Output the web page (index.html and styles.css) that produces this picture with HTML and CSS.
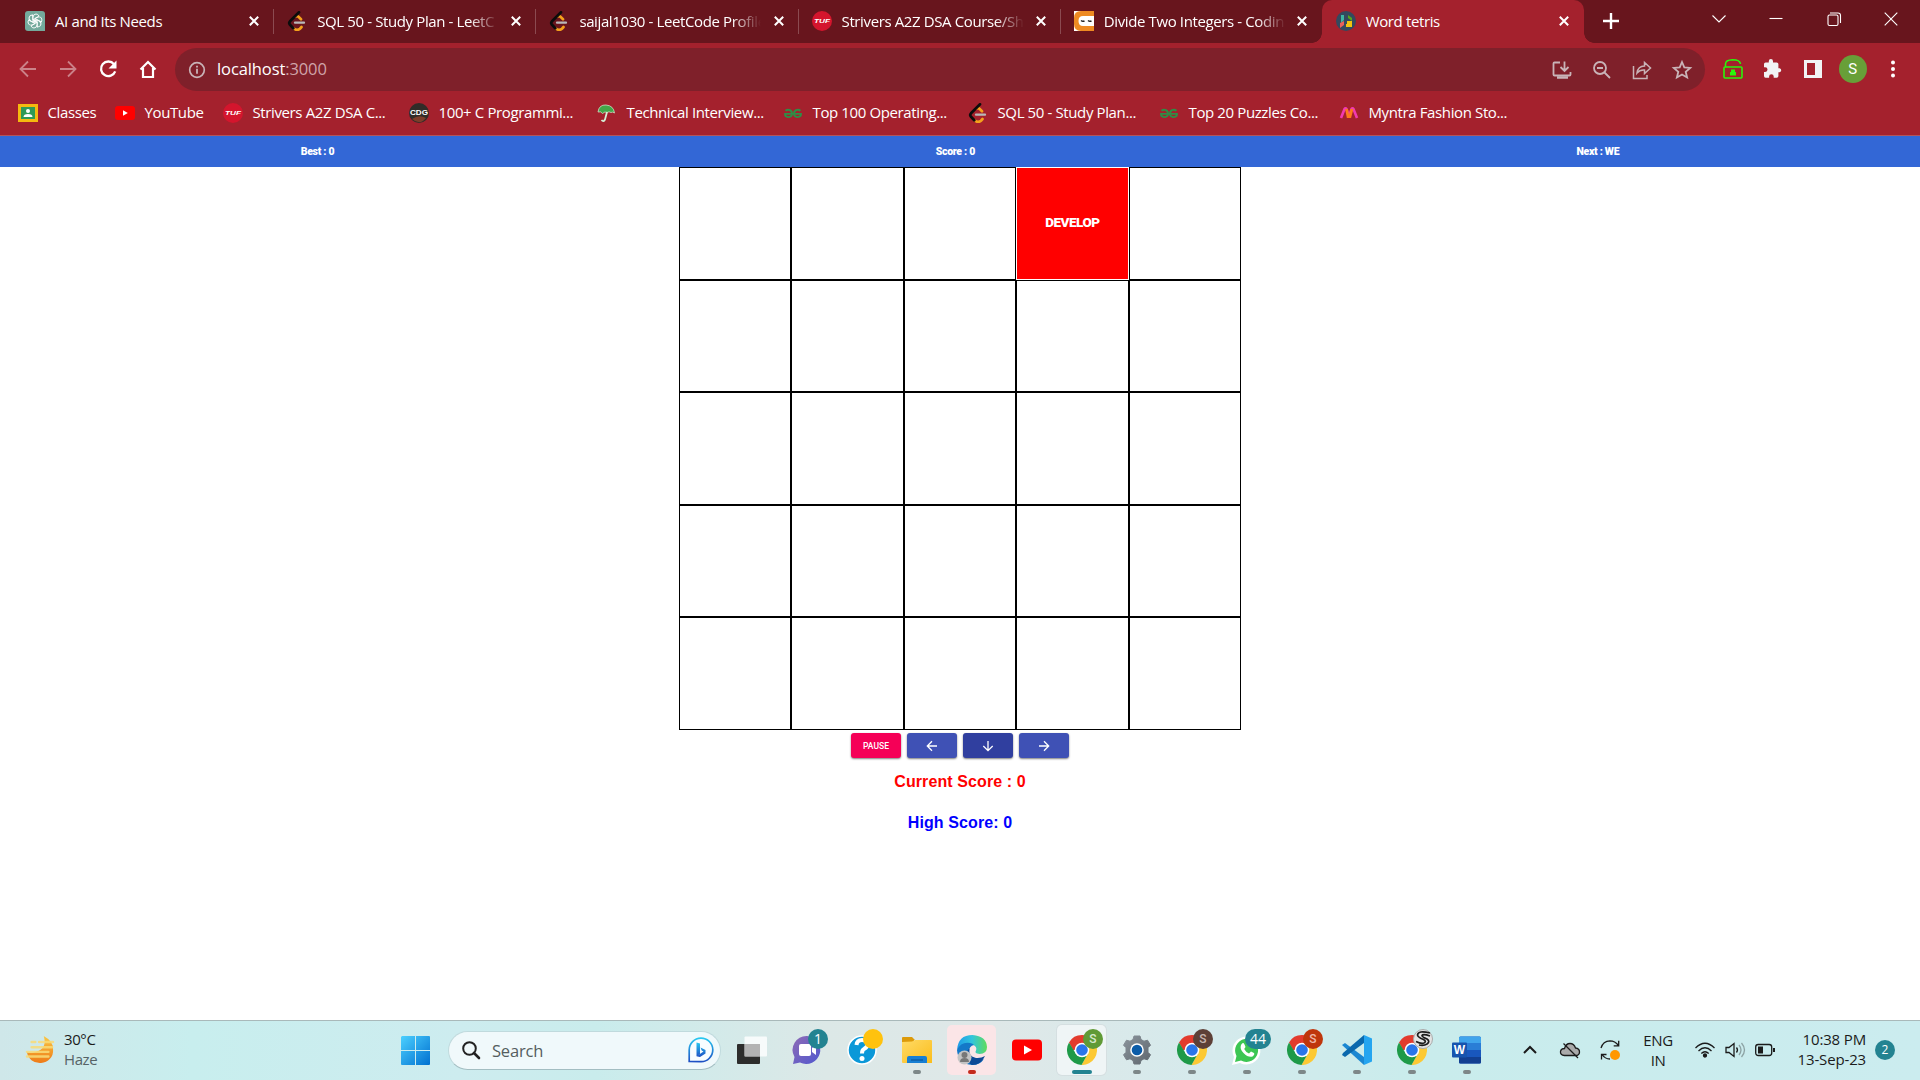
FILE: index.html
```html
<!DOCTYPE html>
<html lang="en">
<head>
<meta charset="utf-8">
<title>Word tetris</title>
<link rel="stylesheet" href="styles.css">
</head>
<body>
<svg class="defs" width="0" height="0">
  <defs>
    <linearGradient id="win" x1="0" y1="0" x2="1" y2="1"><stop offset="0" stop-color="#4cd0ff"/><stop offset="1" stop-color="#0070d0"/></linearGradient>
    <linearGradient id="sun" x1="0" y1="0" x2="0" y2="1"><stop offset="0" stop-color="#f9c846"/><stop offset="1" stop-color="#ee7a17"/></linearGradient>
    <linearGradient id="bing" x1="0" y1="0" x2="0" y2="1"><stop offset="0" stop-color="#28c8f0"/><stop offset="1" stop-color="#1d4fc4"/></linearGradient>
    <linearGradient id="chat" x1="0" y1="0" x2="1" y2="1"><stop offset="0" stop-color="#8f6bb5"/><stop offset="1" stop-color="#5058cf"/></linearGradient>
    <linearGradient id="folder" x1="0" y1="0" x2="1" y2="1"><stop offset="0" stop-color="#ffda65"/><stop offset="1" stop-color="#fbbd1c"/></linearGradient>
    <linearGradient id="edge" x1="0" y1="0" x2="1" y2="0"><stop offset="0" stop-color="#1d9ae8"/><stop offset=".5" stop-color="#32c5dc"/><stop offset="1" stop-color="#5fdc5c"/></linearGradient>
    <linearGradient id="gear" x1="0" y1="0" x2="1" y2="1"><stop offset="0" stop-color="#8b949c"/><stop offset="1" stop-color="#5f676e"/></linearGradient>
    <symbol id="x" viewBox="0 0 10 10"><path d="M.8.8l8.4 8.4M9.2.8L.8 9.200" stroke="#fff" stroke-width="2" fill="none"/></symbol>
    <symbol id="leet" viewBox="0 0 20 20"><path d="M8.500 5.500q1.600-1 3 .3l2.500 2.400M6.500 17.300q3.500 2.900 6.500.4l1.500-1.700" fill="none" stroke="#f5a11c" stroke-width="2.700" stroke-linecap="round"/><path d="M12 1.300L3 10.300q-1.600 1.800 0 3.500l3.300 3.500" fill="none" stroke="#0c0c0c" stroke-width="2.700" stroke-linecap="round"/><path d="M8 11.700h9" stroke="#b9b9b9" stroke-width="2.300" stroke-linecap="round"/></symbol>
    <symbol id="tuf" viewBox="0 0 20 20"><circle cx="10" cy="10" r="10" fill="#d4152d"/><text x="10" y="12.200" text-anchor="middle" textLength="16" lengthAdjust="spacingAndGlyphs" class="tuf">TUF</text></symbol>
    <symbol id="gfg" viewBox="0 0 20 20"><path d="M2.500 7.800q2-1.800 4.500-.6Q9.600 8.600 8.800 12q-.8 2.200-3.600 2.100Q1.800 13.800 2 10.900h16q.2 2.900-3.200 3.200-2.800.1-3.600-2.100-.8-3.400 1.800-4.800 2.500-1.200 4.500.6" fill="none" stroke="#2f8d46" stroke-width="1.900"/></symbol>
    <symbol id="chrome" viewBox="0 0 30 30"><path d="M2 7.500A15 15 0 0 1 28.200 8H15v7H6z" fill="#e33b2e"/><path d="M15 8h13.300A15 15 0 0 1 14.500 30L21.200 18Z" fill="#fcc934"/><path d="M2 7.500L9 19l6 3 6-3.500L14.500 30A15 15 0 0 1 2 7.500Z" fill="#1e9a48"/><circle cx="15" cy="15" r="7.300" fill="#fff"/><circle cx="15" cy="15" r="5.800" fill="#2a75ea"/></symbol>
  </defs>
</svg>

<header class="browser">
  <div class="tabs">
    <div class="tab">
      <svg class="fav" viewBox="0 0 20 20"><path d="M3 0h14q3 0 3 3v17H3q-3 0-3-3V3q0-3 3-3" fill="#74aa9c"/><g fill="none" stroke="#fff" stroke-width=".9"><path id="petal" d="M8 11V6.200Q8.300 3 11 3q2 0 3 2L10 7.400V10"/><path d="M8 11V6.200Q8.300 3 11 3q2 0 3 2L10 7.400V10" transform="rotate(60 10 10)"/><path d="M8 11V6.200Q8.300 3 11 3q2 0 3 2L10 7.400V10" transform="rotate(120 10 10)"/><path d="M8 11V6.200Q8.300 3 11 3q2 0 3 2L10 7.400V10" transform="rotate(180 10 10)"/><path d="M8 11V6.200Q8.300 3 11 3q2 0 3 2L10 7.400V10" transform="rotate(240 10 10)"/><path d="M8 11V6.200Q8.300 3 11 3q2 0 3 2L10 7.400V10" transform="rotate(300 10 10)"/></g></svg>
      <span class="title">AI and Its Needs</span><svg class="close"><use href="#x"/></svg>
    </div>
    <div class="tab"><svg class="fav"><use href="#leet"/></svg><span class="title cut">SQL 50 - Study Plan - LeetC</span><svg class="close"><use href="#x"/></svg></div>
    <div class="tab"><svg class="fav"><use href="#leet"/></svg><span class="title cut">saijal1030 - LeetCode Profile</span><svg class="close"><use href="#x"/></svg></div>
    <div class="tab"><svg class="fav"><use href="#tuf"/></svg><span class="title cut">Strivers A2Z DSA Course/Sh</span><svg class="close"><use href="#x"/></svg></div>
    <div class="tab last">
      <svg class="fav" viewBox="0 0 20 20"><path d="M0 0h20v20H0z" fill="#fff"/><path d="M20 0v5H9Q4.500 5 4.500 10T9 15h11v5H7Q0 20 0 13V7q0-7 7-7z" fill="#ee8a22"/><path d="M7 9.500q1.700 1.500 3.500.3M14 9.500q1.700 1.500 3.500.3" stroke="#222" stroke-width="1.400" fill="none"/></svg>
      <span class="title cut">Divide Two Integers - Codin</span><svg class="close"><use href="#x"/></svg>
    </div>
    <div class="tab active">
      <svg class="fav" viewBox="0 0 20 20"><circle cx="10" cy="10" r="10" fill="#34495e"/><path d="M5 4l3 0v5L5 12z" fill="#3fb5a3"/><path d="M4 12l4-2v4l-4 3z" fill="#e8615a"/><path d="M12 4l4 3v3l-4-3z" fill="#58a618"/><path d="M11 10h5v6h-6v-3h1z" fill="#f1c40f"/></svg>
      <span class="title">Word tetris</span><svg class="close"><use href="#x"/></svg>
    </div>
    <svg class="newtab" viewBox="0 0 16 16"><path d="M8 0v16M0 8h16" stroke="#fff" stroke-width="2.400"/></svg>
    <div class="controls">
      <svg viewBox="0 0 14 14"><path d="M.5 3.500L7 10l6.500-6.500"/></svg>
      <svg viewBox="0 0 14 14"><path d="M.5 6.500h13"/></svg>
      <svg viewBox="0 0 14 14"><rect x="1" y="3" width="10" height="10.500" rx="1.500"/><path d="M3 1h8q2.500 0 2.500 2.500V11"/></svg>
      <svg viewBox="0 0 14 14"><path d="M.7.700l12.600 12.600M13.300.700L.7 13.300"/></svg>
    </div>
  </div>

  <div class="toolbar">
    <nav class="nav">
      <svg class="dim" viewBox="0 0 20 20"><path d="M18 10H3M10 2.500L2.500 10l7.500 7.500"/></svg>
      <svg class="dim" viewBox="0 0 20 20"><path d="M2 10h15M10 2.500l7.500 7.500-7.500 7.500"/></svg>
      <svg viewBox="0 0 20 20"><path d="M16 5.200A7.300 7.300 0 1 0 17.200 12.300" stroke-width="2.300"/><path d="M18.500 1.500v8h-8z" fill="#fff" stroke="none"/></svg>
      <svg viewBox="0 0 20 20"><path d="M2.500 10.500L10 3l7.500 7.500M5 9v9h10V9" stroke-width="2.200"/></svg>
    </nav>
    <div class="omnibox">
      <svg class="info" viewBox="0 0 18 18"><circle cx="9" cy="9" r="7.300" fill="none" stroke="#c9b3b7" stroke-width="1.700"/><path d="M9 7.800v5M9 4.700v1.900" stroke="#c9b3b7" stroke-width="1.800"/></svg>
      <span class="url">localhost<span>:3000</span></span>
      <div class="actions">
        <svg viewBox="0 0 20 20"><path d="M8 2.500H2.500q-1 0-1 1v11q0 1 1 1h15q1 0 1-1V12M12.500 1.500v9M8.500 7l4 4 4-4"/><path d="M5 17.500h11" stroke-width="2.500"/></svg>
        <svg viewBox="0 0 20 20"><circle cx="8" cy="8" r="6"/><path d="M5 8h6M12.500 12.500L18 18"/></svg>
        <svg viewBox="0 0 20 20"><path d="M1.500 6v12.500h13.500V15M5 13q1-7 7.500-7V2.500L18.500 8l-6 5.500V10Q8 9.500 5 13z" stroke-width="1.500"/></svg>
        <svg viewBox="0 0 20 20"><path d="M10 2l2.300 5.400 5.900.5-4.500 3.900 1.400 5.700L10 14.500l-5.100 3 1.400-5.700L1.800 7.900l5.900-.5z"/></svg>
      </div>
    </div>
    <div class="extensions">
      <svg viewBox="0 0 20 20"><path d="M2 8h16q1 0 1 1v9q0 1-1 1H2q-1 0-1-1V9q0-1 1-1M2.500 8V5q0-4 7-4.200Q17 .800 17.500 5" fill="none" stroke="#29f60b" stroke-width="1.600"/><path d="M8 10.500h4v2.500h1V16.500H7v-3.500h1z" fill="#29f60b"/></svg>
      <svg viewBox="0 0 20 20"><path d="M16.600 9.200h-1.200V5.100q0-1.700-1.700-1.700H10V2.200a2.100 2.100 0 0 0-4.200 0v1.200H2.600Q1 3.400 1 5v3.300h1.200a2.300 2.300 0 0 1 0 4.600H1V17q0 1.700 1.600 1.700h3.500v-1.200a2.300 2.300 0 0 1 4.600 0v1.200h3q1.700 0 1.700-1.700v-3.700h1.200a2.100 2.100 0 0 0 0-4.100z" fill="#f1f3f4"/></svg>
      <svg viewBox="0 0 20 20"><path d="M1 1h18v18H1zM4 4v12h8V4z" fill="#f1f3f4" fill-rule="evenodd"/></svg>
      <b class="avatar">S</b>
      <svg viewBox="0 0 20 20"><g fill="#fff"><circle cx="10" cy="3.500" r="2"/><circle cx="10" cy="10" r="2"/><circle cx="10" cy="16.500" r="2"/></g></svg>
    </div>
  </div>

  <nav class="bookmarks">
    <a><svg viewBox="0 0 20 20"><path d="M0 1h20v18H0z" fill="#f5b90f"/><path d="M3 4h14v12H3z" fill="#2f9a57"/><circle cx="10" cy="8" r="2" fill="#fff"/><path d="M5.500 14q0-3 4.500-3t4.500 3z" fill="#fff"/></svg><span>Classes</span></a>
    <a><svg viewBox="0 0 20 20"><rect y="3" width="20" height="14" rx="3" fill="#f00"/><path d="M8 7.300v5.400l4.800-2.700z" fill="#fff"/></svg><span>YouTube</span></a>
    <a><svg><use href="#tuf"/></svg><span>Strivers A2Z DSA C...</span></a>
    <a><svg viewBox="0 0 20 20"><circle cx="10" cy="10" r="10" fill="#302c28"/><path d="M3 16q7-5 14-1-6 8-14 1" fill="#7c3d2a"/><text x="10" y="12" text-anchor="middle" textLength="18" lengthAdjust="spacingAndGlyphs" class="cdg">CDG</text></svg><span>100+ C Programmi...</span></a>
    <a><svg viewBox="0 0 20 20"><path d="M1 9Q2 1.500 9 2q7.500.500 8.500 8-2-1.500-3.500-.5-2-1.500-4 0-2-1.500-4.500 1Q4 8 1 9z" fill="#43a548" stroke="#d6f0d8" stroke-width=".7"/><path d="M10 9L8 16.500q-1.500 3-3.500.500" fill="none" stroke="#d6f0d8" stroke-width="1.800"/></svg><span>Technical Interview...</span></a>
    <a><svg><use href="#gfg"/></svg><span>Top 100 Operating...</span></a>
    <a><svg><use href="#leet"/></svg><span>SQL 50 - Study Plan...</span></a>
    <a><svg><use href="#gfg"/></svg><span>Top 20 Puzzles Co...</span></a>
    <a><svg viewBox="0 0 20 20"><path d="M2 15L5.500 6q1-1.500 2 0L10 13" fill="none" stroke="#f13ab1" stroke-width="2.600"/><path d="M10 13l2.500-7q1-1.500 2 0l3.500 9" fill="none" stroke="#f13ab1" stroke-width="2.600"/><path d="M7.500 6L9 13.500h2L13 6" fill="none" stroke="#fd7a1c" stroke-width="2.800"/></svg><span>Myntra Fashion Sto...</span></a>
  </nav>
</header>

<main class="game">
  <div class="scorebar"><span>Best : 0</span><span>Score : 0</span><span>Next : WE</span></div>
  <div class="board">
    <i></i><i></i><i></i><i class="word">DEVELOP</i><i></i>
    <i></i><i></i><i></i><i></i><i></i>
    <i></i><i></i><i></i><i></i><i></i>
    <i></i><i></i><i></i><i></i><i></i>
    <i></i><i></i><i></i><i></i><i></i>
  </div>
  <div class="buttons">
    <button class="pause">PAUSE</button>
    <button><svg viewBox="0 0 12 12"><path d="M11 6H1.500M6 1.300L1.300 6 6 10.700"/></svg></button>
    <button class="down"><svg viewBox="0 0 12 12"><path d="M6 1v9.500M1.300 6L6 10.700 10.700 6"/></svg></button>
    <button><svg viewBox="0 0 12 12"><path d="M1 6h9.500M6 1.300L10.700 6 6 10.700"/></svg></button>
  </div>
  <p class="current">Current Score : 0</p>
  <p class="high">High Score: 0</p>
</main>

<footer class="taskbar">
  <div class="weather">
    <svg viewBox="0 0 30 30"><path d="M19 0Q30 6 29 15A14 13 0 0 1 1 17q4 2 10 0 12-4 8-17z" fill="url(#sun)"/><path d="M6 6.500h4M14 6.500h15M6 12h22M1 17h23M1 22h23" stroke="#f9dc78" stroke-width="2.600" stroke-linecap="round" opacity=".85"/></svg>
    <div><span>30°C</span><span class="haze">Haze</span></div>
  </div>
  <svg class="start" viewBox="0 0 29 29"><path d="M1 0h13v14H0V1zM15 0h13q1 0 1 1v13H15zM0 15h14v14H1q-1 0-1-1zM15 15h14v13q0 1-1 1H15z" fill="url(#win)"/></svg>
  <div class="search">
    <svg viewBox="0 0 18 18"><circle cx="7.500" cy="7.500" r="6.300" fill="none" stroke="#222" stroke-width="2"/><path d="M12 12l5 5" stroke="#222" stroke-width="2.600" stroke-linecap="round"/></svg>
    <span>Search</span>
    <svg class="bing" viewBox="0 0 26 26"><path d="M1.200 24.500V13A11.800 11.800 0 1 1 13 24.700z" fill="#f8fdff" stroke="url(#bing)" stroke-width="1.700"/><path d="M8.500 5.500l3.500 1v10.500l-3.500 2.200zM8.500 19.200l3.500.800 5.500-3.500V13l-5-2.500 1.200 3 1.800 1z" fill="url(#bing)"/></svg>
  </div>
  <div class="apps">
    <div class="app"><svg viewBox="0 0 30 30"><rect y="9" width="23" height="20" rx="1" fill="#2d2d2c"/><rect x="7.500" y="1.500" width="22.500" height="20" rx="1" fill="#fff" opacity=".8"/><path d="M7.500 9H23v12.500H7.500z" fill="#aaa" opacity=".8"/></svg></div>
    <div class="app"><svg viewBox="0 0 30 30"><path d="M15 1A14 14 0 1 1 8 27.500L1 29l1.500-7A14 14 0 0 1 15 1z" fill="url(#chat)"/><rect x="7" y="9" width="12" height="12" rx="2" fill="#fff"/><path d="M20 13l4-3v10l-4-3z" fill="#fff"/></svg><b class="badge">1</b></div>
    <div class="app"><svg viewBox="0 0 30 30"><circle cx="15" cy="15" r="14" fill="#0b98d8" stroke="#fff" stroke-width="1.500"/><path d="M9.500 10Q10 5 15 5t5.500 4.500Q20.500 12 17 14q-2 1-2 4.500" fill="none" stroke="#fff" stroke-width="4"/><circle cx="15" cy="23.500" r="2.500" fill="#fff"/></svg><b class="badge yellow"></b></div>
    <div class="app run"><svg viewBox="0 0 30 30"><path d="M0 3q0-1 1-1h9l3 3h-1v4H0z" fill="#dc9a0a"/><path d="M0 7l10-.500L13 5h16q1 0 1 1v22H1q-1 0-1-1z" fill="url(#folder)"/><path d="M5 28v-5q0-2 2-2h16q2 0 2 2v5z" fill="#177fd3"/><path d="M9 25h12" stroke="#0b579b" stroke-width="1.200"/></svg></div>
    <div class="app run edge"><svg viewBox="0 0 30 30"><path d="M0 15Q1 0 15.500 0 29.500 1 30 12q0 7-7.500 7-5.500-.5-3.500-3.500 1.500-4-3.500-6Q8 7 0 15z" fill="url(#edge)"/><path d="M0 15Q4 6.500 13 8q3 .5 4 2-5 1-5 6.500Q12 25 21 26q4 0 6-2-4 6-12 6Q1 29 0 15z" fill="#1478c8"/><path d="M12.500 13.500q-1.500 8 6.500 9.500 5 .5 9-2-4 9-13 9-6-3-6.500-9 .5-5 4-7.500z" fill="#0d4a96"/><circle cx="7.500" cy="22.500" r="7" fill="#c4c4c4"/><circle cx="7.500" cy="20" r="3" fill="#777"/><path d="M3 27q0-4 4.500-4t4.500 4z" fill="#777"/></svg></div>
    <div class="app"><svg viewBox="0 0 30 30"><rect y="4.500" width="30" height="21" rx="4" fill="#f00"/><path d="M12 10.500v9l8-4.500z" fill="#fff"/></svg></div>
    <div class="app run front"><svg><use href="#chrome"/></svg><b class="badge green">S</b></div>
    <div class="app run"><svg viewBox="0 0 30 30"><path d="M11 4.500l1-3.500h6l1 3.500 3 1.700 3.500-1 3 5-2.500 2.500v4.600l2.500 2.500-3 5-3.500-1-3 1.700-1 3.500h-6l-1-3.500-3-1.700-3.500 1-3-5L4 17.300v-4.600l-2.500-2.500 3-5 3.500 1z" fill="url(#gear)" stroke="url(#gear)" stroke-linejoin="round"/><circle cx="15" cy="15" r="6.800" fill="#fff"/><circle cx="15" cy="15" r="5.300" fill="#0c5ca8"/></svg></div>
    <div class="app run"><svg><use href="#chrome"/></svg><b class="badge brown">S</b></div>
    <div class="app run"><svg viewBox="0 0 30 30"><path d="M0 30l2-8A14 14 0 1 1 8 28z" fill="#fff"/><path d="M3 27l1.500-6A11.500 11.500 0 1 1 9 25.500z" fill="#3cc653"/><path d="M9 10q2-3.500 3.500-.5l1 2.500-1.300 2q1.800 3.500 4.800 4.500l2-2 3 1.500q1 1.500-1.500 3.500-4 1.500-9-3.500-4-4-2.500-8z" fill="#fff"/></svg><b class="badge wide">44</b></div>
    <div class="app run"><svg><use href="#chrome"/></svg><b class="badge rust">S</b></div>
    <div class="app run"><svg viewBox="0 0 30 30"><path d="M22 0l8 3.500v23L22 30z" fill="#25a5f0"/><path d="M0 10l3-2 19 14v8z" fill="#1b87d2"/><path d="M22 0v8L3 22l-3-2 1-2z" fill="#0a68ad"/></svg></div>
    <div class="app run"><svg><use href="#chrome"/></svg><svg class="badge swirl" viewBox="0 0 20 20"><circle cx="10" cy="10" r="9.500" fill="#e4e4e4" stroke="#aaa"/><path d="M17 4Q5 1 4.500 6q0 2 6 4.500 3.500 2 .5 3.500-3 1-8-1.500M17 7q-7-2.500-8-.5 0 1.500 5 3.500 3.500 2.500 0 5-3 2-8 1" fill="none" stroke="#1c1c1c" stroke-width="1.700"/></svg></div>
    <div class="app run"><svg viewBox="0 0 30 30"><rect x="7" y="1.500" width="22" height="27" rx="1.500" fill="#1957bd"/><path d="M7 8V3q0-1.500 1.500-1.500h19Q29 1.500 29 3v5z" fill="#40a4ec"/><path d="M7 8h22v7H7z" fill="#2a7dd6"/><path d="M7 22h22v5q0 1.500-1.500 1.500h-19Q7 28.500 7 27z" fill="#123f91"/><rect y="7.500" width="15" height="15" rx="1" fill="#1754ae"/><text x="7.500" y="19" text-anchor="middle" class="w">W</text></svg></div>
  </div>
  <div class="tray">
    <svg viewBox="0 0 20 20"><path d="M4 13l6-6 6 6" stroke-width="2"/></svg>
    <svg viewBox="0 0 20 20"><path d="M4.500 15.500Q0 15 .5 11.500 1 8.500 4.500 8.500 6 3.500 10 3.500t5.500 4.500q4 .500 4 4t-4 3.500z" fill="#aaa"/><path d="M3.500 3.500L18 18"/></svg>
    <svg viewBox="0 0 20 20"><path d="M1 8Q3 1 10 .800q5 0 8.500 4.700M18.700.800v5h-5M10 19q-5 0-8-4.500M1.500 19.500v-5h5"/><circle cx="15" cy="15" r="5" fill="#ff9800" stroke="none"/></svg>
    <div class="lang"><span>ENG</span><span>IN</span></div>
    <svg viewBox="0 0 20 20"><path d="M.500 8Q10-1.500 19.500 8M3.500 11Q10 4.500 16.500 11M6.300 13.500q3.700-3.500 7.400 0"/><circle cx="10" cy="15.500" r="1.500" fill="#1b1b1b"/></svg>
    <svg viewBox="0 0 20 20"><path d="M1 7.500h3L9 3.500v13l-5-4H1zM11.500 7.500q2 2.500 0 5"/><path d="M14 5q4 5 0 10M16.500 3q6 7 0 14" opacity=".35"/></svg>
    <svg viewBox="0 0 20 20"><rect x=".7" y="4.500" width="16" height="11" rx="2.500"/><path d="M3 6.500h5v7H3zM18 8h2v4h-2z" fill="#1b1b1b" stroke="none"/></svg>
    <div class="clock"><span>10:38 PM</span><span>13-Sep-23</span></div>
    <b class="count">2</b>
  </div>
</footer>
</body>
</html>
```
FILE: styles.css
```css
* { box-sizing: border-box; }
body {
  margin: 0;
  width: 1920px;
  height: 1080px;
  overflow: hidden;
  display: flex;
  flex-direction: column;
  background: #fff;
  font-family: "Open Sans", "Noto Sans", sans-serif;
}
.defs { position: absolute; }
svg { display: block; flex: none; overflow: visible; }

/* browser frame */
.browser {
  height: 136px;
  background: #a4212d;
  border-bottom: 1px solid #b2535a;
  color: #fff;
  font-size: 15px;
  letter-spacing: -.38px;
}
.tabs {
  height: 43px;
  display: flex;
  padding-left: 12px;
  background: #68151d;
}
.tab {
  width: 262.200px;
  display: flex;
  align-items: center;
  padding: 0 15px 1px 13px;
  background: linear-gradient(#8b4a50, #8b4a50) right 9px / 1px 25px no-repeat;
}
.tab.last { background: none; width: 261px; }
.tab.active {
  position: relative;
  width: 262px;
  padding-left: 14px;
  background: #a4212d;
  border-radius: 10px 10px 0 0;
}
.tab.active::before,
.tab.active::after {
  content: "";
  position: absolute;
  bottom: 0;
  width: 10px;
  height: 10px;
}
.tab.active::before { left: -10px; background: radial-gradient(circle at 0 0, transparent 9.500px, #a4212d 10px); }
.tab.active::after { right: -10px; background: radial-gradient(circle at 100% 0, transparent 9.500px, #a4212d 10px); }
.fav { width: 20px; height: 20px; margin-right: 10px; }
.title { width: 182px; margin-right: auto; padding-bottom: 1px; white-space: nowrap; }
.cut { -webkit-mask-image: linear-gradient(90deg, #000 84%, transparent); mask-image: linear-gradient(90deg, #000 84%, transparent); }
.close { width: 10px; height: 10px; }
.newtab { width: 16px; height: 16px; margin: 13px 0 0 19px; }
.controls {
  display: flex;
  gap: 43.500px;
  margin: 12px 0 0 auto;
  padding-right: 22px;
}
.controls svg { width: 14px; height: 14px; fill: none; stroke: #fff; stroke-width: 1.100; }
.toolbar { height: 48px; display: flex; padding-top: 5px; }
.nav { width: 175px; display: flex; gap: 20px; padding: 11px 0 0 17.500px; }
.nav svg { width: 20px; height: 20px; fill: none; stroke: #fff; stroke-width: 1.800; }
.nav .dim { stroke: #cb8289; }
.omnibox {
  width: 1530px;
  height: 43px;
  display: flex;
  align-items: center;
  padding: 0 13px 0 13px;
  border-radius: 22px;
  background: #7f202a;
}
.info { width: 18px; height: 18px; }
.url { margin: 0 0 2px 11px; font-size: 16.500px; letter-spacing: -.1px; }
.url span { color: #d0a4a9; }
.actions { display: flex; gap: 20px; margin-left: auto; }
.actions svg { width: 20px; height: 20px; fill: none; stroke: #c9b3b7; stroke-width: 1.800; }
.extensions { display: flex; align-items: center; gap: 20px; padding: 0 0 2px 17.500px; }
.extensions svg { width: 20px; height: 20px; }
.avatar {
  width: 28px;
  height: 28px;
  margin: 0 -4px;
  border-radius: 50%;
  background: #689f38;
  font: 15px/28px Roboto, sans-serif;
  text-align: center;
}
.bookmarks {
  height: 44px;
  display: grid;
  grid-template-columns: 97px 108px 186px 188px 186px 185px 191px 180px 190px;
  align-items: center;
  padding-left: 18px;
}
.bookmarks a { display: flex; align-items: center; gap: 9.500px; white-space: nowrap; }
.bookmarks span { padding-bottom: 2px; }
.bookmarks svg { width: 20px; height: 20px; }
.tuf { font: italic bold 6px "Liberation Sans", sans-serif; fill: #fff; letter-spacing: 0; }
.cdg { font: bold 8px "Liberation Sans", sans-serif; fill: #fff; letter-spacing: 0; }
.w { font: bold 12px "Liberation Sans", sans-serif; fill: #fff; }

/* game */
.game { flex: 1; display: flex; flex-direction: column; align-items: center; }
.scorebar {
  width: 100%;
  height: 31px;
  display: flex;
  justify-content: space-around;
  align-items: center;
  background: #3367d6;
  color: #fff;
  font: 900 10.500px Roboto, sans-serif;
  letter-spacing: -.3px;
}
.board { width: 562px; height: 563px; display: grid; grid-template: repeat(5, 1fr) / repeat(5, 1fr); }
.board i { border: 1px solid #000; }
.board .word {
  display: grid;
  place-items: center;
  padding-bottom: 2px;
  border-color: #fff;
  background: red;
  color: #fff;
  font: 900 13.500px Roboto, sans-serif;
  letter-spacing: -.5px;
}
.buttons { display: flex; gap: 6px; margin-top: 3px; }
.buttons button {
  width: 50px;
  height: 25px;
  display: grid;
  place-items: center;
  padding: 0;
  border: 0;
  border-radius: 3px;
  background: #3f51b5;
  box-shadow: 0 1px 2px rgba(0, 0, 0, .5);
  color: #fff;
  font: 500 8.500px Roboto, sans-serif;
}
.buttons .pause { background: #f50057; }
.buttons .down { background: #303f9f; }
.buttons svg { width: 12px; height: 12px; fill: none; stroke: #fff; stroke-width: 1.300; }
.game p { margin: 0; font: bold 16px/20px "Liberation Sans", Arial, sans-serif; letter-spacing: .1px; }
.current { color: red; padding-top: 14px; }
.high { color: #00f; padding-top: 21px; }

/* taskbar */
.taskbar {
  height: 60px;
  display: flex;
  align-items: center;
  border-top: 1px solid #a9b9ba;
  background: linear-gradient(90deg, #cfe7e9, #c8eeee 10%, #cdecef 24%, #c9ecec 31%, #dce8e7 43%, #dfe8e8 52%, #d5eaec 63%, #c9ecec 74%, #cbecef);
  color: #1b1b1b;
  font-size: 15px;
}
.weather { width: 401px; display: flex; align-items: center; gap: 9px; padding: 0 0 2px 25px; }
.weather > svg { width: 30px; height: 28px; }
.weather div, .clock, .lang { display: flex; flex-direction: column; line-height: 20px; letter-spacing: -.4px; }
.weather div { padding-bottom: 2px; }
.haze { color: #566366; }
.start { width: 29px; height: 29px; }
.search {
  width: 273px;
  height: 39px;
  display: flex;
  align-items: center;
  margin: 0 0 1px 18px;
  padding: 0 6px 0 13px;
  border: 1px solid #c0dadd;
  border-bottom-color: #a3bec2;
  border-radius: 20px;
  background: #f0f9fb;
}
.search svg { width: 18px; height: 18px; }
.search span { flex: 1; margin-left: 12px; color: #555e60; font-size: 16.500px; letter-spacing: -.2px; }
.search .bing { width: 26px; height: 26px; }
.apps { display: flex; margin: 0 0 1px 3px; }
.app { position: relative; width: 49px; height: 50px; margin: 0 3px; display: grid; place-items: center; border-radius: 5px; }
.app > svg { width: 30px; height: 30px; }
.run::after {
  content: "";
  position: absolute;
  left: 20.500px;
  bottom: 1px;
  width: 8px;
  height: 4px;
  border-radius: 2px;
  background: #7d8788;
}
.edge { background: #fbe5e7; }
.edge::after { background: #c42b1c; }
.front { background: #eff5f6; box-shadow: 0 0 0 1px #d5dfe1; }
.front::after { left: 14.500px; width: 20px; background: #238391; }
.app .badge {
  position: absolute;
  left: 26px;
  top: 4px;
  width: 20px;
  height: 20px;
  border-radius: 10px;
  background: #238391;
  color: #fff;
  font: 14px/20px "Open Sans", sans-serif;
  text-align: center;
}
.app .yellow { background: #ffc20e; }
.app .green, .app .brown, .app .rust { font: 500 12px/20px Roboto, sans-serif; }
.app .green { background: #609a36; color: #d7e8cc; }
.app .brown { background: #5d4037; color: #c7b5af; }
.app .rust { background: #bf360c; color: #efb7a7; }
.app .wide { left: 23px; width: 26px; }
.app .swirl { background: none; }
.tray { flex: 1; display: flex; align-items: center; padding: 0 0 1px 26px; }
.tray svg { width: 20px; height: 20px; margin-right: 20px; fill: none; stroke: #1b1b1b; stroke-width: 1.300; }
.lang { width: 50px; margin: 0 12px 0 -7px; text-align: center; }
.clock { padding-bottom: 2px; }
.tray .lang + svg, .tray .lang + svg + svg { margin-right: 10px; }
.tray .lang + svg + svg + svg { margin-right: 0; }
.clock { width: 91px; text-align: right; letter-spacing: -.15px; }
.count { width: 20px; height: 20px; margin-left: 9px; border-radius: 50%; background: #238391; color: #fff; font: 12px/20px "Open Sans", sans-serif; text-align: center; }
```
